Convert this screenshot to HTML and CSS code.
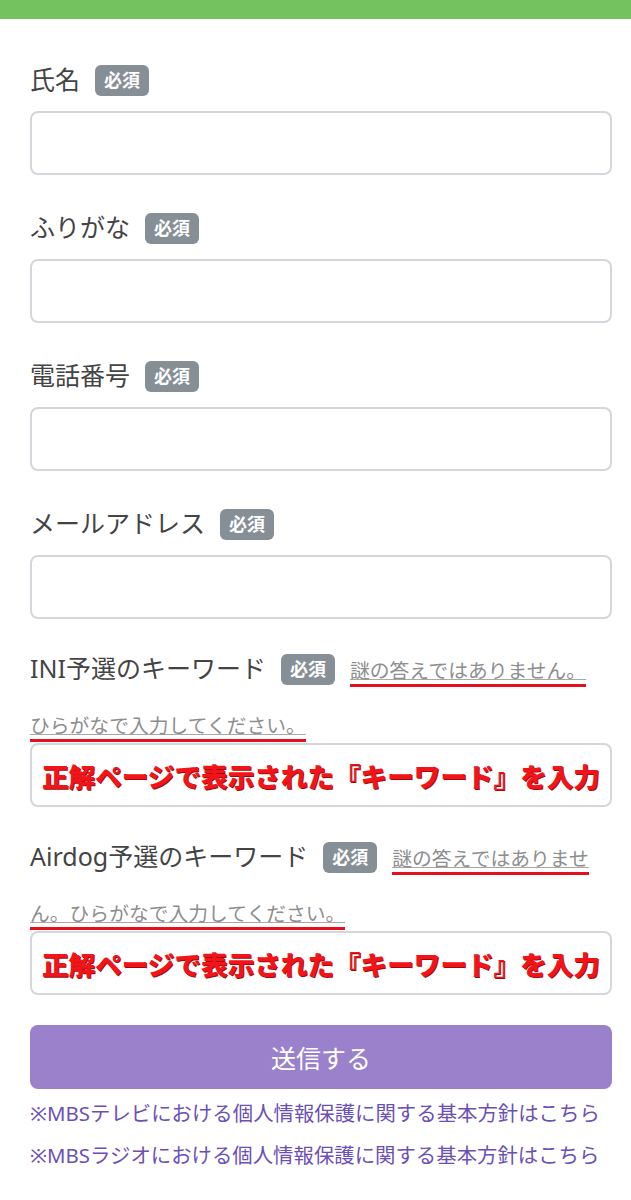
FILE: index.html
```html
<!DOCTYPE html>
<html lang="ja">
<head>
<meta charset="utf-8">
<title>応募フォーム</title>
<link rel="stylesheet" href="styles.css">
</head>
<body>
<div class="topbar"></div>
<form class="form">
  <div class="group">
    <label class="label">氏名<span class="badge">必須</span></label>
    <input class="field" type="text">
  </div>
  <div class="group">
    <label class="label">ふりがな<span class="badge">必須</span></label>
    <input class="field" type="text">
  </div>
  <div class="group">
    <label class="label">電話番号<span class="badge">必須</span></label>
    <input class="field" type="tel">
  </div>
  <div class="group">
    <label class="label">メールアドレス<span class="badge">必須</span></label>
    <input class="field" type="email">
  </div>
  <div class="group">
    <label class="label label--hint">INI予選のキーワード<span class="badge">必須</span><span class="hint">謎の答えではありません。ひらがなで入力してください。</span></label>
    <div class="field field--note"><span class="note">正解ページで表示された『キーワード』を入力</span></div>
  </div>
  <div class="group">
    <label class="label label--hint">Airdog予選のキーワード<span class="badge">必須</span><span class="hint">謎の答えではありません。ひらがなで入力してください。</span></label>
    <div class="field field--note"><span class="note">正解ページで表示された『キーワード』を入力</span></div>
  </div>
  <button class="submit" type="button">送信する</button>
  <ul class="links">
    <li><a href="#">※MBSテレビにおける個人情報保護に関する基本方針はこちら</a></li>
    <li><a href="#">※MBSラジオにおける個人情報保護に関する基本方針はこちら</a></li>
  </ul>
</form>
</body>
</html>
```
FILE: styles.css
```css
* {
  box-sizing: border-box;
}

body {
  margin: 0;
  background: #fff;
  font-family: "Noto Sans", "Noto Sans CJK JP", sans-serif;
  color: #444;
}

.topbar {
  height: 19px;
  background: #74c15f;
}

.form {
  padding: 42px 19px 40px 30px;
}

.group + .group {
  margin-top: 34px;
}

.label {
  display: block;
  font-size: 25px;
  line-height: 36px;
  margin-bottom: 14px;
  padding-right: 7px;
}

.badge {
  display: inline-block;
  margin-left: 15px;
  padding: 0 9px;
  height: 31px;
  line-height: 31px;
  font-size: 18px;
  font-weight: 700;
  color: #fff;
  background: #868e96;
  border-radius: 6px;
  vertical-align: 2px;
}

.label--hint {
  line-height: 55px;
  margin: -12px 0 -8px;
}

.hint {
  margin-left: 15px;
  font-size: 19.8px;
  line-height: 20px;
  color: #8e8e8e;
  text-decoration: underline;
  text-decoration-color: #a8a8a8;
  text-underline-offset: 1px;
  border-bottom: 3px solid #e60f1e;
}

.field {
  display: block;
  width: 100%;
  height: 64px;
  margin: 0;
  border: 2px solid #d3d6da;
  border-radius: 8px;
  background: #fff;
  font: inherit;
}

.field--note {
  display: flex;
  align-items: center;
  justify-content: center;
}

.note {
  font-family: "Noto Sans CJK JP", sans-serif;
  font-size: 26.6px;
  font-weight: 900;
  color: #f21419;
  white-space: nowrap;
  text-shadow: 1px 1px 0 #9c0a0a;
}

.submit {
  display: block;
  width: 100%;
  height: 64px;
  margin-top: 30px;
  border: 0;
  border-radius: 8px;
  background: #9b80cb;
  color: #fff;
  font: inherit;
  font-size: 25px;
}

.links {
  list-style: none;
  margin: 3px 0 0;
  padding: 0;
}

.links li {
  font-size: 20.4px;
  line-height: 42px;
}

.links a {
  color: #6c4fb6;
  text-decoration: none;
}
```
